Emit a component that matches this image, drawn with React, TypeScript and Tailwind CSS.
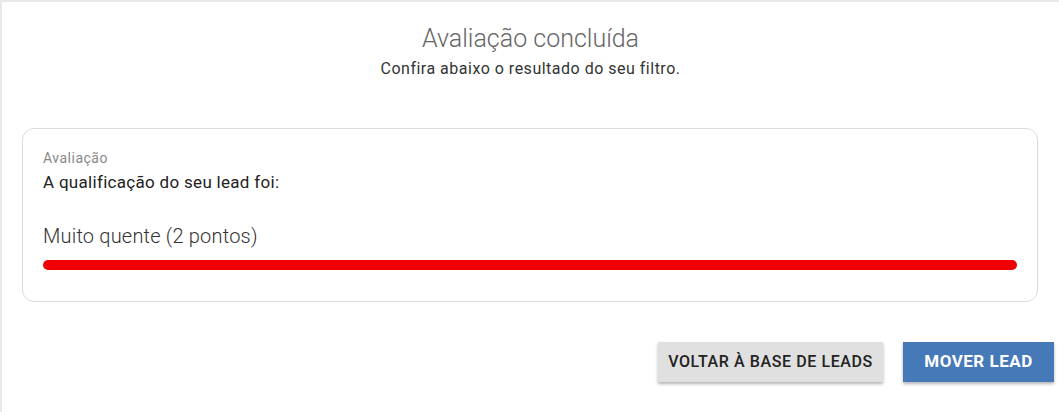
import React from "react";

export default function App() {
  return (
    <div className="h-[412px] w-[1059px] overflow-hidden bg-white border-t-2 border-l-2 border-[#e8e8e8] font-['Roboto',sans-serif]">
      <div className="pt-[21px] text-center">
        <h1 className="text-[25px] font-light leading-[32px] text-[#666]">Avaliação concluída</h1>
        <p className="mt-[4px] text-[16px] leading-[20px] tracking-[0.5px] text-[#333]">
          Confira abaixo o resultado do seu filtro.
        </p>
      </div>

      <div className="mt-[49px] ml-[20px] mr-[21px] rounded-xl border border-[#dcdcdc] px-5 pt-[20px] pb-[31px]">
        <p className="text-[14px] leading-[18px] tracking-[0.5px] text-[#888]">Avaliação</p>
        <p className="mt-[4px] text-[17px] leading-[22px] tracking-[0.3px] text-[#222]">
          A qualificação do seu lead foi:
        </p>
        <p className="mt-[30px] text-[20px] font-light leading-[26px] tracking-[0.2px] text-[#333]">
          Muito quente (2 pontos)
        </p>
        <div className="mt-[11px] h-[10px] w-full rounded-full bg-[#f00000]" />
      </div>

      <div className="mt-[40px] flex justify-end gap-5 pr-[5px]">
        <button className="h-[40px] w-[225px] bg-[#e0e0e0] text-[16px] font-medium tracking-[0.6px] text-[#222] shadow-[0_2px_3px_rgba(0,0,0,0.3)]">
          VOLTAR À BASE DE LEADS
        </button>
        <button className="h-[40px] w-[151px] bg-[#4679b8] text-[17px] font-bold tracking-[0.5px] text-white shadow-[0_2px_3px_rgba(0,0,0,0.3)]">
          MOVER LEAD
        </button>
      </div>
    </div>
  );
}
